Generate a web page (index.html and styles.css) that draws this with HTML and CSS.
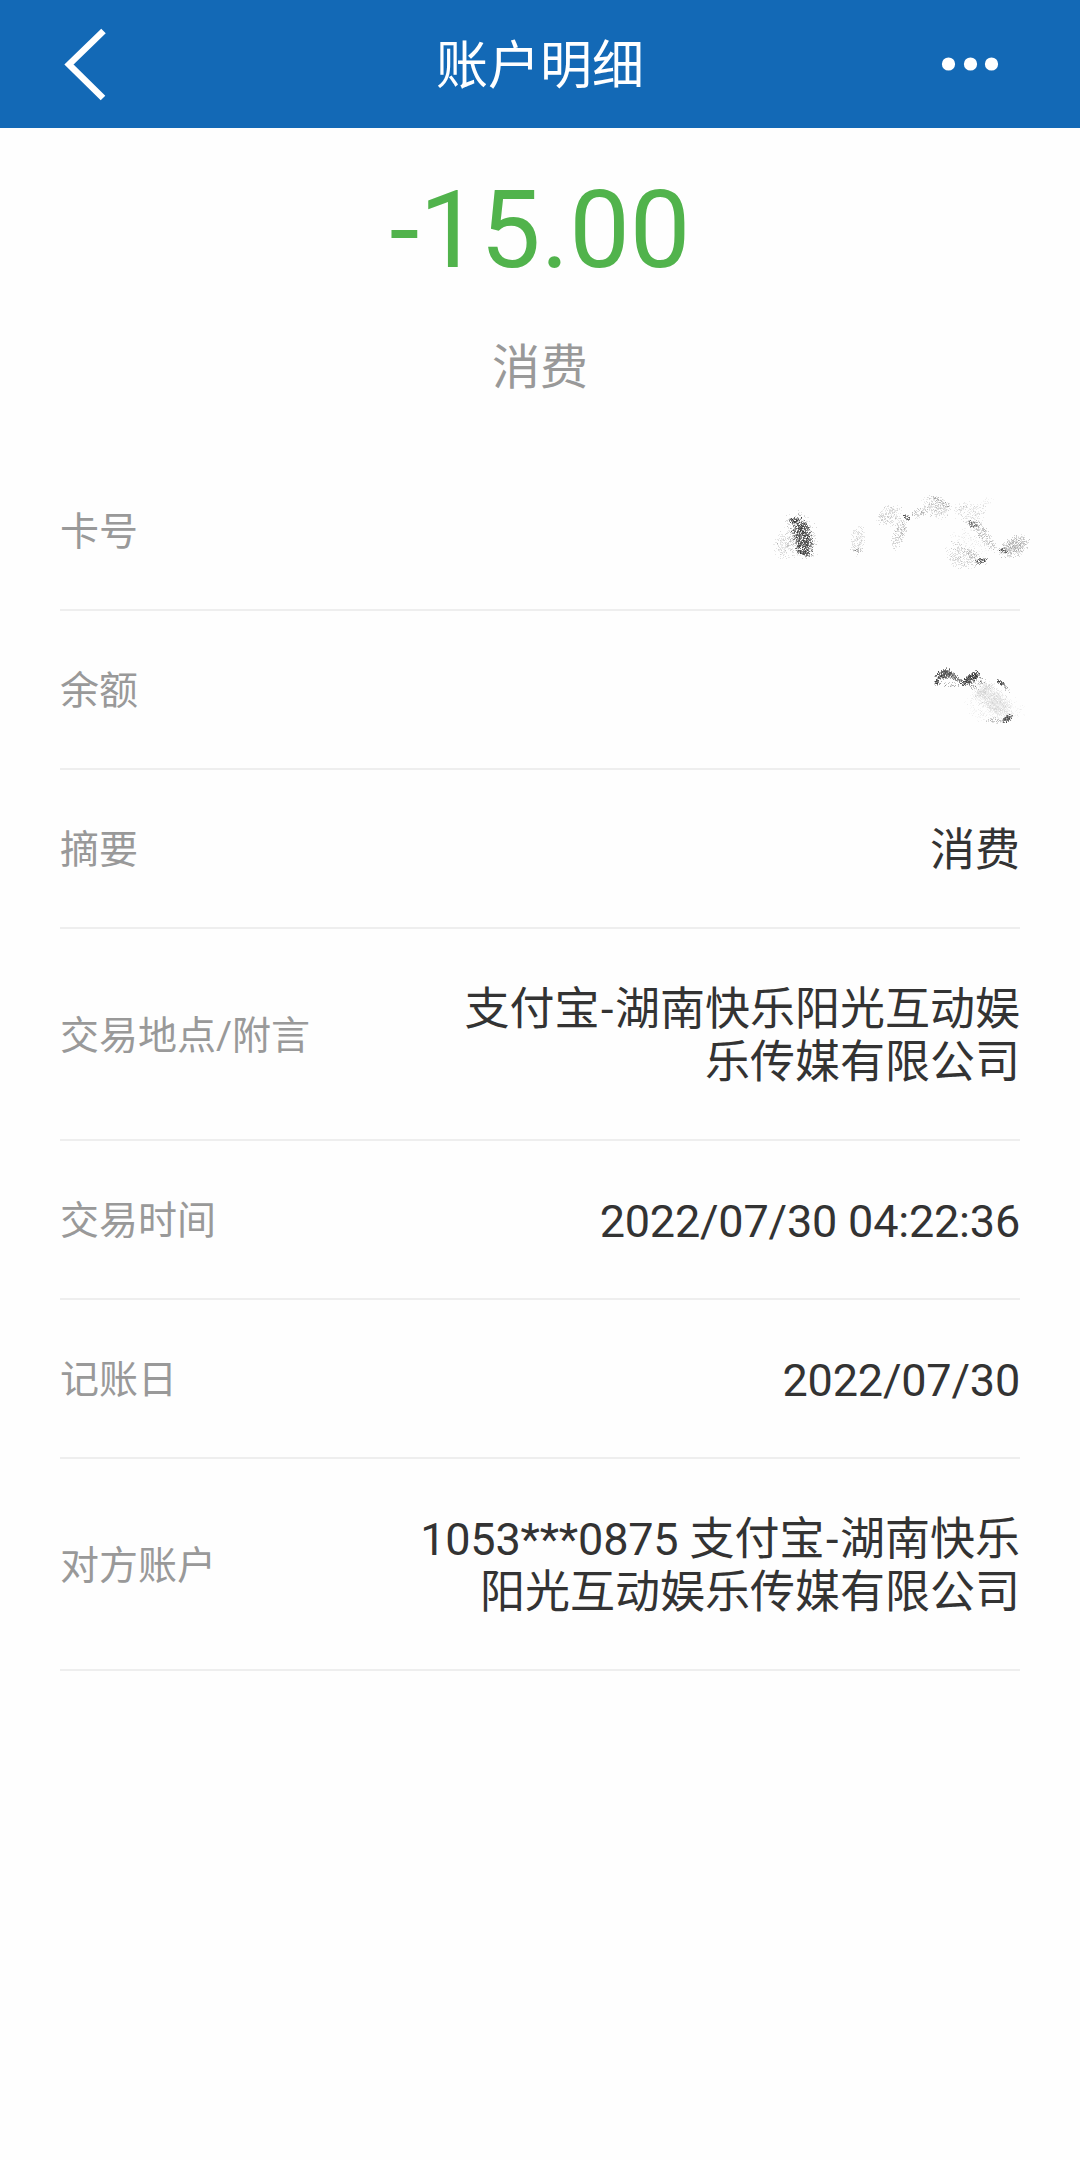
FILE: index.html
```html
<!DOCTYPE html>
<html lang="zh-CN">
<head>
<meta charset="utf-8">
<title>账户明细</title>
<link rel="stylesheet" href="styles.css">
</head>
<body>
<header class="bar">
  <svg class="back" viewBox="0 0 44 74" width="44" height="74"><path d="M39.500 4L5 37.500L39 71" fill="none" stroke="#fff" stroke-width="6.500"/></svg>
  <h1 class="title">账户明细</h1>
  <svg class="more" viewBox="0 0 58 16" width="58" height="16" fill="#fff"><circle cx="7.500" cy="8" r="6.600"/><circle cx="29.500" cy="8" r="6.600"/><circle cx="50.500" cy="8" r="6.600"/></svg>
</header>
<main>
  <section class="summary">
    <div class="amount">-15.00</div>
    <div class="kind">消费</div>
  </section>
  <dl class="list">
    <div class="row"><dt>卡号</dt><dd class="masked card"><canvas id="card" width="320" height="120"></canvas></dd></div>
    <div class="row"><dt>余额</dt><dd class="masked balance"><canvas id="balance" width="160" height="110"></canvas></dd></div>
    <div class="row"><dt>摘要</dt><dd>消费</dd></div>
    <div class="row"><dt>交易地点/附言</dt><dd>支付宝<span class="dash">-</span>湖南快乐阳光互动娱<br>乐传媒有限公司</dd></div>
    <div class="row"><dt>交易时间</dt><dd><span class="num">2022/07/30 04:22:36</span></dd></div>
    <div class="row"><dt>记账日</dt><dd><span class="num">2022/07/30</span></dd></div>
    <div class="row"><dt>对方账户</dt><dd><span class="num">1053***0875 </span>支付宝<span class="dash">-</span>湖南快乐<br>阳光互动娱乐传媒有限公司</dd></div>
  </dl>
</main>
<script src="smudge.js"></script>
</body>
</html>
```
FILE: styles.css
```css
* { box-sizing: border-box; }
body {
  margin: 0;
  min-height: 2160px;
  background: #fefefe;
  color: #333;
  font-family: Roboto, "Noto Sans CJK SC", sans-serif;
}
.bar {
  display: grid;
  grid-template-columns: 1fr auto 1fr;
  align-items: center;
  height: 128px;
  padding: 0 80px 0 64px;
  background: #1369b6;
}
.back { display: block; }
.title {
  margin: 0;
  padding: 6px 0 0 16px;
  color: #fff;
  font-size: 52px;
  font-weight: 400;
  line-height: 76px;
}
.more {
  justify-self: end;
  margin-right: 1px;
}
.summary {
  display: flex;
  flex-direction: column;
  align-items: center;
  height: 324px;
  padding-top: 39px;
}
.amount {
  color: #51b34c;
  font-size: 108px;
  line-height: 127px;
}
.kind {
  margin-top: 39px;
  color: #999;
  font-size: 48px;
  line-height: 70px;
}
.list { margin: 0 60px; }
.row {
  display: flex;
  justify-content: space-between;
  align-items: center;
  padding: 54px 0 50px;
  border-bottom: 2px solid #eee;
}
dt {
  color: #999;
  font-size: 39px;
  line-height: 53px;
}
dd {
  margin: 0;
  font-size: 45px;
  line-height: 53px;
  text-align: right;
}
.dash {
  display: inline-block;
  width: 15.6px;
  text-align: center;
}
.num { letter-spacing: -0.2px; }
.masked canvas { display: block; }
.card { margin: -36px -40px -31px 0; }
.balance { margin: -25px -40px -32px 0; }
```
FILE: smudge.js
```javascript
// Grainy smudges over the private values.
// Each patch: centre x, centre y, half length, half width, angle (deg), grains, grey, opacity
let seed = 7;
function rnd() {
  seed = (seed * 1664525 + 1013904223) % 4294967296;
  return seed / 4294967296;
}
function smudge(id, patches) {
  const ctx = document.getElementById(id).getContext("2d");
  for (const [cx, cy, a, b, deg, count, grey, alpha] of patches) {
    const t = deg * Math.PI / 180;
    for (let i = 0; i < count; i++) {
      const r = Math.sqrt(rnd()) * (0.6 + 0.6 * rnd());
      const p = rnd() * Math.PI * 2;
      const u = r * Math.cos(p) * a;
      const v = r * Math.sin(p) * b;
      const x = Math.round(cx + u * Math.cos(t) - v * Math.sin(t));
      const y = Math.round(cy + u * Math.sin(t) + v * Math.cos(t));
      const g = Math.round(grey + rnd() * 50);
      ctx.fillStyle = `rgba(${g},${g},${g},${alpha * (0.4 + 0.6 * rnd())})`;
      ctx.fillRect(x, y, 1, 1);
    }
  }
}
smudge("card", [
  [60, 66, 24, 17, 70, 560, 120, 0.35],
  [62, 66, 19, 9, 75, 750, 40, 0.75],
  [53, 50, 6, 3, 0, 60, 30, 0.8],
  [62, 82, 8, 3, 25, 80, 40, 0.75],
  [43, 76, 13, 9, 90, 160, 130, 0.35],
  [117, 70, 15, 7, 100, 180, 150, 0.35],
  [118, 80, 5, 2, 0, 25, 90, 0.5],
  [149, 45, 13, 10, -20, 220, 140, 0.4],
  [159, 63, 16, 6, 110, 190, 120, 0.4],
  [166, 47, 6, 2, 38, 34, 40, 0.8],
  [179, 42, 10, 5, -30, 80, 120, 0.45],
  [196, 36, 14, 10, 25, 280, 140, 0.4],
  [200, 31, 13, 2, 30, 50, 100, 0.5],
  [229, 43, 15, 11, 20, 230, 150, 0.35],
  [245, 33, 9, 5, -30, 40, 180, 0.3],
  [233, 54, 6, 4, 20, 70, 60, 0.6],
  [244, 65, 19, 6, 52, 200, 120, 0.45],
  [232, 73, 22, 15, 20, 190, 180, 0.3],
  [222, 87, 17, 11, 20, 260, 140, 0.4],
  [230, 83, 20, 4, 35, 90, 110, 0.4],
  [241, 90, 7, 3, -20, 65, 40, 0.75],
  [274, 76, 16, 9, -28, 500, 125, 0.45],
  [263, 80, 4, 3, 20, 35, 40, 0.65]
]);
smudge("balance", [
  [43, 34, 9, 5, -20, 220, 40, 0.7],
  [37, 42, 3, 3, 0, 45, 40, 0.8],
  [53, 36, 11, 3, 32, 140, 60, 0.7],
  [70, 38, 11, 4, -35, 270, 35, 0.8],
  [50, 44, 16, 3, 0, 35, 80, 0.5],
  [77, 42, 11, 7, -30, 65, 70, 0.6],
  [84, 50, 13, 3, -38, 100, 170, 0.6],
  [93, 60, 23, 11, 45, 1700, 195, 0.45],
  [82, 66, 19, 14, 30, 240, 190, 0.3],
  [100, 42, 5, 2, 30, 55, 40, 0.8],
  [106, 48, 5, 2, 55, 25, 130, 0.6],
  [107, 78, 7, 3, -35, 95, 40, 0.75],
  [96, 80, 10, 3, 0, 70, 120, 0.5],
  [113, 69, 13, 11, 40, 90, 200, 0.3]
]);
```
